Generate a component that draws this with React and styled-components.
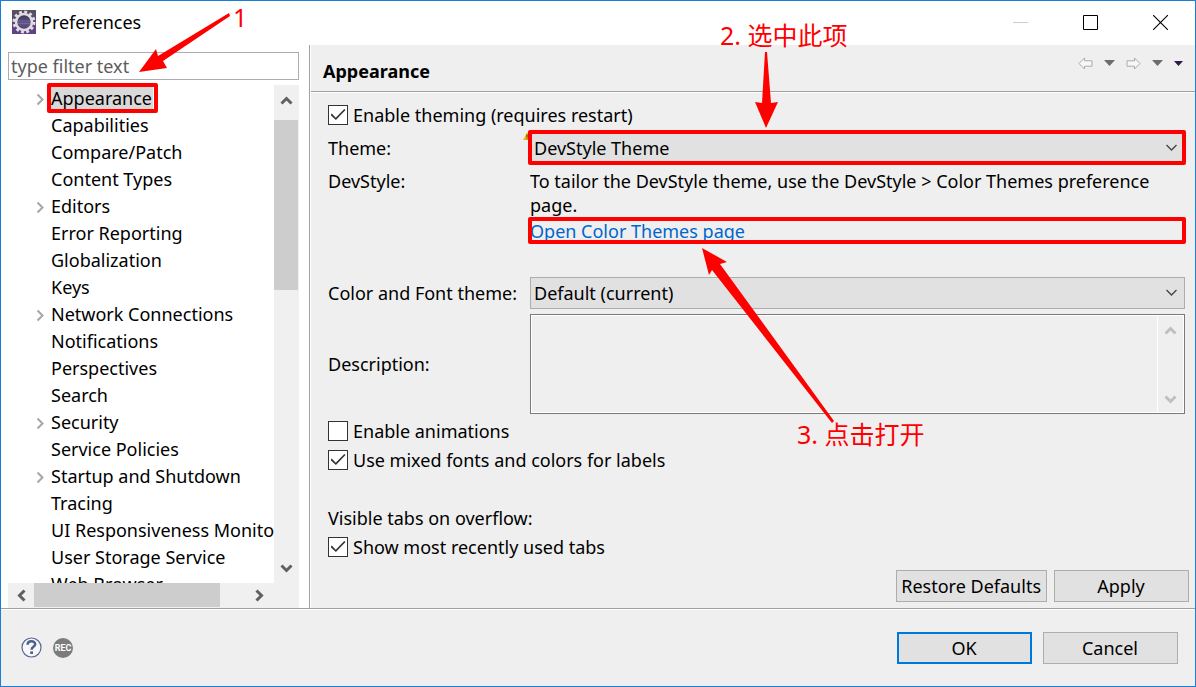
import React from "react";
import styled, { createGlobalStyle, css } from "styled-components";

const Global = createGlobalStyle`
  *, *::before, *::after { box-sizing: border-box; }
  body { margin: 0; }
  body, button, input, select, textarea {
    font-family: "Noto Sans", "Noto Sans CJK SC", sans-serif;
    font-size: 18px;
    line-height: 24px;
    color: #000;
  }
`;

const Window = styled.div`
  position: relative;
  display: flex;
  flex-direction: column;
  min-height: 100vh;
  background: #efefef;
  border: 1px solid #1a7fd4;
  overflow: hidden;
`;

const TitleBar = styled.header`
  display: flex;
  align-items: center;
  justify-content: space-between;
  height: 44px;
  padding: 0 0 2px 11px;
  background: #fff;
`;

const TitleGroup = styled.div`
  display: flex;
  align-items: center;
  gap: 5px;
`;

const Title = styled.h1`
  margin: 0;
  font-size: 18px;
  font-weight: 400;
`;

const BareButton = styled.button`
  display: flex;
  align-items: center;
  justify-content: center;
  padding: 0;
  border: 0;
  background: transparent;
`;

const CaptionButton = styled(BareButton)`
  width: 70px;
  height: 42px;
`;

const CaptionButtons = styled.div`
  display: flex;
`;

const Body = styled.div`
  flex: 1;
  display: grid;
  grid-template-columns: 310px minmax(0, 1fr);
`;

const Sidebar = styled.nav`
  display: flex;
  flex-direction: column;
  padding: 7px 10px 0 7px;
  background: #fff;
  border-right: 1px solid #a0a0a0;
  margin-right: 1px;
  box-shadow: 1px 0 #fff;
`;

const Filter = styled.input`
  width: 100%;
  height: 28px;
  padding: 0 2px;
  border: 1px solid #abadb3;
  background: #fff;
  &::placeholder { color: #5c5c5c; opacity: 1; }
`;

const TreeGrid = styled.div`
  flex: 1;
  display: grid;
  grid-template-columns: minmax(0, 1fr) 25px;
  grid-template-rows: minmax(0, 1fr) 25px;
  margin-top: 5px;
  background: #f0f0f0;
`;

/* The extra top padding leaves room for the outline of the first row. */
const Tree = styled.ul`
  height: 500px;
  margin: -2px 0 0;
  padding: 2px 0 0;
  list-style: none;
  overflow: hidden;
  background: #fff;
`;

const TreeRow = styled.li`
  display: flex;
  align-items: center;
  height: 27px;
  padding-bottom: 2px;
  white-space: nowrap;
`;

const Twisty = styled.span`
  flex: none;
  display: flex;
  justify-content: center;
  width: 16px;
  margin: 3px 2px 0 24px;
`;

const marked = css`
  position: relative;
  &::after {
    content: "";
    position: absolute;
    inset: ${(p) => p.$inset};
    border: 4px solid #f00;
    border-radius: 2px;
    pointer-events: none;
  }
`;

const TreeLabel = styled.span`
  padding: 0 1px;
  ${(p) => p.$selected && css`background: #d9d9d9;`}
  ${(p) => p.$selected && marked}
`;

const VScroll = styled.div`
  display: flex;
  flex-direction: column;
  align-items: stretch;
`;

const HScroll = styled.div`
  display: flex;
`;

const ScrollArrow = styled(BareButton)`
  flex: none;
  width: ${(p) => p.$w || 24}px;
  height: ${(p) => p.$h || 24}px;
`;

const VThumb = styled.div`
  width: 24px;
  height: 170px;
  margin: 5px 0 auto;
  background: #cdcdcd;
`;

const HThumb = styled.div`
  width: 186px;
  height: 24px;
  margin-right: auto;
  background: #cdcdcd;
`;

const Page = styled.main`
  display: flex;
  flex-direction: column;
`;

const PageHeader = styled.div`
  display: flex;
  justify-content: space-between;
  height: 48px;
  padding: 0 12px;
  border-bottom: 1px solid #fff;
  box-shadow: inset 0 -1px #a0a0a0;
`;

const PageTitle = styled.h2`
  margin: 14px 0 0;
  font-size: 18px;
  font-weight: 700;
`;

const History = styled.div`
  display: flex;
  align-items: center;
  gap: 11px;
  height: 36px;
`;

const Form = styled.form`
  flex: 1;
  display: flex;
  flex-direction: column;
  padding: 10px 10px 0 17px;
`;

const CheckLabel = styled.label`
  display: flex;
  align-items: center;
  gap: 5px;
  height: 24px;
  margin-top: ${(p) => p.$top || 0}px;
`;

const CheckBox = styled.input`
  appearance: none;
  width: 20px;
  height: 20px;
  margin: 0;
  border: 1px solid #333;
  background: #fff;
  display: grid;
  place-items: center;
  &:checked::before {
    content: "";
    width: 15px;
    height: 12px;
    background: #333;
    clip-path: polygon(0 50%, 8% 38%, 35% 72%, 92% 0, 100% 9%, 36% 92%);
  }
`;

const Fields = styled.div`
  display: grid;
  grid-template-columns: 202px minmax(0, 1fr);
  row-gap: 5px;
  margin-top: 5px;
`;

const FieldLabel = styled.label`
  align-self: ${(p) => p.$align || "center"};
`;

const SelectWrap = styled.div`
  position: relative;
  height: 32px;
  ${(p) => p.$marked && marked}
`;

const Select = styled.select`
  appearance: none;
  display: block;
  width: 100%;
  height: 32px;
  padding: 0 30px 0 3px;
  border: 1px solid #adadad;
  border-radius: 0;
  background: #e1e1e1;
`;

const SelectChevron = styled.svg`
  position: absolute;
  top: 12px;
  right: 7px;
  pointer-events: none;
`;

const Warning = styled.svg`
  position: absolute;
  top: 0;
  left: -8px;
`;

const Info = styled.div`
  padding-bottom: 28px;
`;

const InfoText = styled.p`
  margin: 0;
`;

const LinkBox = styled.div`
  height: 27px;
  padding-top: 2px;
  ${marked}
`;

const PageLink = styled.a`
  color: #0066cc;
  text-decoration: none;
`;

const DescriptionBox = styled.div`
  display: grid;
  grid-template-columns: minmax(0, 1fr) 27px;
  height: 100px;
  border: 1px solid #7a7a7a;
  box-shadow: inset 0 0 0 1px #fff;
`;

const Description = styled.textarea`
  display: block;
  width: 100%;
  height: 98px;
  border: 0;
  resize: none;
  background: transparent;
`;

const DescriptionScroll = styled.div`
  display: flex;
  flex-direction: column;
  justify-content: space-between;
  border-left: 1px solid #fff;
  padding: 3px 0 2px;
`;

const SectionText = styled.p`
  margin: 34px 0 0;
`;

const PageButtons = styled.div`
  display: flex;
  justify-content: flex-end;
  gap: 7px;
  margin-top: auto;
  padding: 0 6px 6px 0;
`;

const PushButton = styled.button`
  min-width: 135px;
  height: 32px;
  padding: 0 5px 0 4px;
  border: ${(p) => (p.$primary ? "2px solid #0078d7" : "1px solid #adadad")};
  background: #e1e1e1;
  white-space: nowrap;
`;

const Footer = styled.footer`
  display: flex;
  align-items: center;
  justify-content: space-between;
  height: 78px;
  padding: 0 17px 0 20px;
  border-top: 1px solid #a0a0a0;
  box-shadow: inset 0 1px #fff;
`;

const FooterGroup = styled.div`
  display: flex;
  align-items: center;
  gap: 11px;
`;

const Arrows = styled.svg`
  position: absolute;
  top: 0;
  left: 0;
  pointer-events: none;
`;

const Note = styled.span`
  position: absolute;
  top: ${(p) => p.$y}px;
  left: ${(p) => p.$x}px;
  font-size: 25px;
  line-height: 32px;
  color: #f00;
  white-space: nowrap;
  pointer-events: none;
`;

const turns = { right: 0, down: 90, left: 180, up: 270 };

const Chevron = ({ dir, color = "#606060", stroke = 3 }) => (
  <svg width="15" height="15" viewBox="0 0 15 15" aria-hidden="true">
    <path d="M4.5 2.5l5 5-5 5" fill="none" stroke={color} strokeWidth={stroke} transform={`rotate(${turns[dir]} 7.5 7.5)`} />
  </svg>
);

const GearLogo = () => (
  <svg width="24" height="24" viewBox="0 0 24 24" aria-hidden="true">
    <defs>
      <linearGradient id="logoBack" x1="0" y1="0" x2="0" y2="1">
        <stop offset="0" stopColor="#55505f" />
        <stop offset="1" stopColor="#62408a" />
      </linearGradient>
      <linearGradient id="logoCore" x1="0" y1="0" x2="0" y2="1">
        <stop offset="0" stopColor="#3a364c" />
        <stop offset="0.6" stopColor="#63558a" />
        <stop offset="1" stopColor="#443b66" />
      </linearGradient>
    </defs>
    <rect width="24" height="24" fill="url(#logoBack)" />
    <circle cx="12" cy="12" r="10" fill="none" stroke="#e2e0e4" strokeWidth="3" strokeDasharray="2.8 2.436" />
    <circle cx="12" cy="12" r="8" fill="url(#logoCore)" stroke="#dedce0" strokeWidth="2.6" />
    <path d="M6 11h12M6 13.5h12" stroke="#7d6fa3" strokeWidth="0.7" />
  </svg>
);

const HistoryArrow = ({ flip }) => (
  <svg width="15" height="13" viewBox="0 0 15 13" aria-hidden="true">
    <path d="M1 6.5L6.5 1v2.8H14v5.4H6.5V12z" fill="#f8f8f8" stroke="#aaa" strokeLinejoin="round" transform={flip ? "matrix(-1 0 0 1 15 0)" : undefined} />
  </svg>
);

const Triangle = ({ w = 11, h = 6, color = "#6d6d6d" }) => (
  <svg width={w} height={h} aria-hidden="true">
    <path d={`M0 0H${w}L${w / 2} ${h}z`} fill={color} />
  </svg>
);

const items = [
  ["Appearance", true],
  ["Capabilities"],
  ["Compare/Patch"],
  ["Content Types"],
  ["Editors", true],
  ["Error Reporting"],
  ["Globalization"],
  ["Keys"],
  ["Network Connections", true],
  ["Notifications"],
  ["Perspectives"],
  ["Search"],
  ["Security", true],
  ["Service Policies"],
  ["Startup and Shutdown", true],
  ["Tracing"],
  ["UI Responsiveness Monitoring"],
  ["User Storage Service"],
  ["Web Browser"],
];

const Combo = ({ id, value, isMarked }) => (
  <SelectWrap $marked={isMarked} $inset="-2px -1px -1px -2px">
    {isMarked && (
      <Warning width="8" height="8" viewBox="0 0 8 8" aria-hidden="true">
        <path d="M5 0.5L8 2V8H1z" fill="#f2b90c" />
        <path d="M5 2.5v3M5 6.3v1" stroke="#4a3500" />
      </Warning>
    )}
    <Select id={id} defaultValue={value}>
      <option>{value}</option>
    </Select>
    <SelectChevron width="13" height="8" viewBox="0 0 13 8" aria-hidden="true">
      <path d="M1.5 1l5 5 5-5" fill="none" stroke="#444" strokeWidth="1.3" />
    </SelectChevron>
  </SelectWrap>
);

export default function App() {
  return (
    <Window>
      <Global />
      <TitleBar>
        <TitleGroup>
          <GearLogo />
          <Title>Preferences</Title>
        </TitleGroup>
        <CaptionButtons>
          <CaptionButton type="button" aria-label="Minimize">
            <svg width="15" height="15"><path d="M0 7.5h15" stroke="#ccc" /></svg>
          </CaptionButton>
          <CaptionButton type="button" aria-label="Maximize">
            <svg width="15" height="15"><path d="M.5.5h14v14H.5z" fill="none" stroke="#000" /></svg>
          </CaptionButton>
          <CaptionButton type="button" aria-label="Close">
            <svg width="15" height="15"><path d="M0 0l15 15M15 0L0 15" stroke="#000" strokeWidth="1.1" /></svg>
          </CaptionButton>
        </CaptionButtons>
      </TitleBar>

      <Body>
        <Sidebar>
          <Filter type="text" placeholder="type filter text" aria-label="Filter" />
          <TreeGrid>
            <Tree>
              {items.map(([name, branch], i) => (
                <TreeRow key={name}>
                  <Twisty>{branch && <Chevron dir="right" color="#a6a6a6" stroke={2} />}</Twisty>
                  <TreeLabel $selected={i === 0} $inset="-3px -5px -3px -3px">{name}</TreeLabel>
                </TreeRow>
              ))}
            </Tree>
            <VScroll>
              <ScrollArrow type="button" aria-label="Scroll up" $h={30}><Chevron dir="up" /></ScrollArrow>
              <VThumb />
              <ScrollArrow type="button" aria-label="Scroll down" $h={30}><Chevron dir="down" /></ScrollArrow>
            </VScroll>
            <HScroll>
              <ScrollArrow type="button" aria-label="Scroll left" $w={26}><Chevron dir="left" /></ScrollArrow>
              <HThumb />
              <ScrollArrow type="button" aria-label="Scroll right" $w={30}><Chevron dir="right" /></ScrollArrow>
            </HScroll>
          </TreeGrid>
        </Sidebar>

        <Page>
          <PageHeader>
            <PageTitle>Appearance</PageTitle>
            <History>
              <BareButton type="button" aria-label="Back"><HistoryArrow /></BareButton>
              <BareButton type="button" aria-label="Back history"><Triangle /></BareButton>
              <BareButton type="button" aria-label="Forward"><HistoryArrow flip /></BareButton>
              <BareButton type="button" aria-label="Forward history"><Triangle /></BareButton>
              <BareButton type="button" aria-label="Menu"><Triangle w={9} h={5} color="#33184f" /></BareButton>
            </History>
          </PageHeader>
          <Form onSubmit={(e) => e.preventDefault()}>
            <CheckLabel>
              <CheckBox type="checkbox" defaultChecked />
              Enable theming (requires restart)
            </CheckLabel>
            <Fields>
              <FieldLabel htmlFor="theme">Theme:</FieldLabel>
              <Combo id="theme" value="DevStyle Theme" isMarked />
              <FieldLabel as="span" $align="start">DevStyle:</FieldLabel>
              <Info>
                <InfoText>To tailor the DevStyle theme, use the DevStyle &gt; Color Themes preference page.</InfoText>
                <LinkBox $inset="0 -1px 0 -2px"><PageLink href="#color-themes">Open Color Themes page</PageLink></LinkBox>
              </Info>
              <FieldLabel htmlFor="fonts">Color and Font theme:</FieldLabel>
              <Combo id="fonts" value="Default (current)" />
              <FieldLabel htmlFor="description">Description:</FieldLabel>
              <DescriptionBox>
                <Description id="description" readOnly />
                <DescriptionScroll>
                  <ScrollArrow type="button" aria-label="Scroll description up"><Chevron dir="up" color="#bfbfbf" /></ScrollArrow>
                  <ScrollArrow type="button" aria-label="Scroll description down"><Chevron dir="down" color="#bfbfbf" /></ScrollArrow>
                </DescriptionScroll>
              </DescriptionBox>
            </Fields>
            <CheckLabel $top={5}>
              <CheckBox type="checkbox" />
              Enable animations
            </CheckLabel>
            <CheckLabel $top={5}>
              <CheckBox type="checkbox" defaultChecked />
              Use mixed fonts and colors for labels
            </CheckLabel>
            <SectionText>Visible tabs on overflow:</SectionText>
            <CheckLabel $top={5}>
              <CheckBox type="checkbox" defaultChecked />
              Show most recently used tabs
            </CheckLabel>
          </Form>
          <PageButtons>
            <PushButton type="button">Restore Defaults</PushButton>
            <PushButton type="button">Apply</PushButton>
          </PageButtons>
        </Page>
      </Body>

      <Footer>
        <FooterGroup>
          <BareButton type="button" aria-label="Help">
            <svg width="21" height="21" viewBox="0 0 21 21">
              <circle cx="10.5" cy="10.5" r="9.5" fill="#f7f8fb" stroke="#566a92" strokeWidth="1.2" />
              <path d="M6.6 7.8C6.6 3 14.2 3.2 14.2 7.3c0 2.6-3.6 2.5-3.6 5.4" fill="none" stroke="#4c618d" strokeWidth="2.5" />
              <path d="M9.2 14.4h2.8v2.6H9.2z" fill="#4c618d" />
            </svg>
          </BareButton>
          <BareButton type="button" aria-label="Record">
            <svg width="20" height="20" viewBox="0 0 20 20">
              <circle cx="10" cy="10" r="10" fill="#7c7c7c" />
              <text x="10" y="13" textAnchor="middle" fontFamily="Roboto, sans-serif" fontSize="9" fontWeight="700" fill="#fff">REC</text>
            </svg>
          </BareButton>
        </FooterGroup>
        <FooterGroup>
          <PushButton type="button" $primary>OK</PushButton>
          <PushButton type="button">Cancel</PushButton>
        </FooterGroup>
      </Footer>

      <Arrows width="900" height="440" viewBox="1 1 900 440" fill="#f00" aria-hidden="true">
        <path d="M139 72L156 49 158 56 229 13 230 16 163 61 167 68z" />
        <path d="M766 128L755 102 762 103 765 52H767L771 103 778 102z" />
        <path d="M702 248L727 262 720 264 834 421 832 423 712 270 709 275z" />
      </Arrows>
      <Note $x={232} $y={0}>1</Note>
      <Note $x={719} $y={18}>2. 选中此项</Note>
      <Note $x={796} $y={417}>3. 点击打开</Note>
    </Window>
  );
}
